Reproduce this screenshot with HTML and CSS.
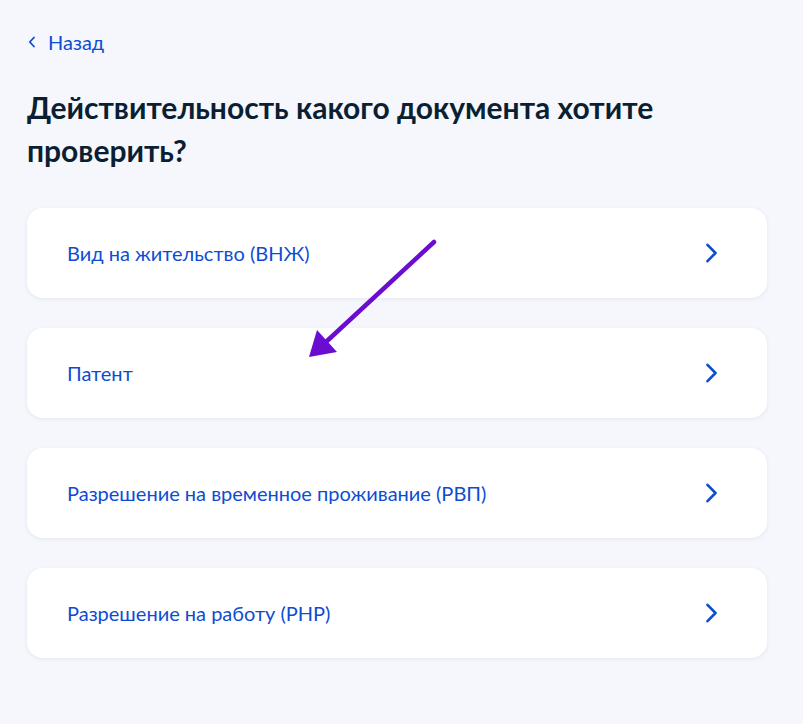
FILE: index.html
```html
<!DOCTYPE html>
<html lang="ru">
<head>
    <meta charset="UTF-8">
    <meta name="viewport" content="width=device-width, initial-scale=1.0">
    <title>Проверка документа</title>
    <link rel="stylesheet" href="styles.css">
</head>
<body>
    <div class="page">
        <a class="back" href="#">
            <svg class="back-icon" width="8" height="12" viewBox="0 0 8 12"><path d="M6 1.5L1.8 6 6 10.5" fill="none" stroke="#0d4cd3" stroke-width="1.8" stroke-linecap="round" stroke-linejoin="round"/></svg>
            <span>Назад</span>
        </a>

        <h1 class="title">Действительность какого документа хотите проверить?</h1>

        <!-- Список документов -->
        <div class="list">
            <a class="item" href="#">
                <span>Вид на жительство (ВНЖ)</span>
                <svg class="chevron" width="14" height="20" viewBox="0 0 14 20"><path d="M2.5 1.8L10.5 10 2.5 18.2" fill="none" stroke="#0d4cd3" stroke-width="2.6" stroke-linecap="round" stroke-linejoin="round"/></svg>
            </a>
            <a class="item" href="#">
                <span>Патент</span>
                <svg class="chevron" width="14" height="20" viewBox="0 0 14 20"><path d="M2.5 1.8L10.5 10 2.5 18.2" fill="none" stroke="#0d4cd3" stroke-width="2.6" stroke-linecap="round" stroke-linejoin="round"/></svg>
            </a>
            <a class="item" href="#">
                <span>Разрешение на временное проживание (РВП)</span>
                <svg class="chevron" width="14" height="20" viewBox="0 0 14 20"><path d="M2.5 1.8L10.5 10 2.5 18.2" fill="none" stroke="#0d4cd3" stroke-width="2.6" stroke-linecap="round" stroke-linejoin="round"/></svg>
            </a>
            <a class="item" href="#">
                <span>Разрешение на работу (РНР)</span>
                <svg class="chevron" width="14" height="20" viewBox="0 0 14 20"><path d="M2.5 1.8L10.5 10 2.5 18.2" fill="none" stroke="#0d4cd3" stroke-width="2.6" stroke-linecap="round" stroke-linejoin="round"/></svg>
            </a>
        </div>

        <!-- стрелка-указатель поверх списка -->
        <svg class="pointer" width="803" height="724" viewBox="0 0 803 724">
            <line x1="434" y1="242" x2="327" y2="341" stroke="#6a0dd1" stroke-width="4.5" stroke-linecap="round"/>
            <polygon points="309,357 317,330 337,352" fill="#6a0dd1"/>
        </svg>
    </div>
</body>
</html>
```

FILE: styles.css
```css
body {
    margin: 0;
    padding: 0;
    background-color: #f5f7fc;
    font-family: Lato, "Open Sans", "Noto Sans", sans-serif;
    color: #0b1f33;
}
.page {
    position: relative;
    width: 803px;
    min-height: 724px;
    padding: 30px 36px 0 27px;
    box-sizing: border-box;
}
.back {
    display: flex;
    align-items: center;
    gap: 12px;
    color: #0d4cd3;
    text-decoration: none;
    font-size: 20px;
    height: 24px;
}
.back-icon {
    margin-left: 1px;
}
.title {
    margin: 32px 0 0;
    font-size: 30px;
    line-height: 43px;
    font-weight: 700;
    color: #0b1f33;
    max-width: 680px;
}
.list {
    margin-top: 36px;
    display: flex;
    flex-direction: column;
    gap: 30px;
}
.item {
    height: 90px;
    background-color: #fff;
    border-radius: 16px;
    box-shadow: 0 1px 4px rgba(102, 119, 160, 0.12);
    display: flex;
    align-items: center;
    justify-content: space-between;
    padding: 0 48px 0 40px;
    color: #0d4cd3;
    text-decoration: none;
    font-size: 20px;
}
.pointer {
    position: absolute;
    top: 0;
    left: 0;
    pointer-events: none;
}
```
